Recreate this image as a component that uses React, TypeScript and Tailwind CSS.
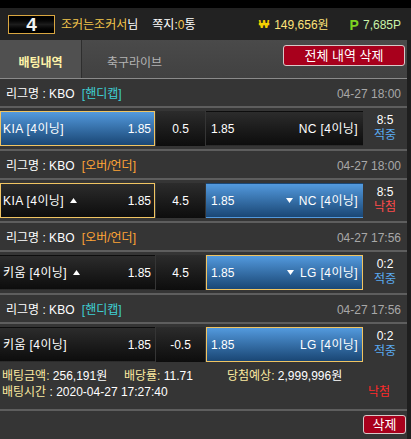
import type { ReactNode } from 'react';

type BoxKind = 'blue' | 'blueSel' | 'dark' | 'darkSel';

const boxClass: Record<BoxKind, string> = {
  blue: 'bg-linear-to-b from-[#539ade] to-[#1a4775] border border-transparent',
  blueSel: 'bg-linear-to-b from-[#539ade] to-[#1a4775] border border-[#f0c462]',
  dark: 'bg-linear-to-b from-[#2c2c2c] to-[#0d0d0d] border border-transparent',
  darkSel: 'bg-linear-to-b from-[#2c2c2c] to-[#0d0d0d] border border-[#f0c462]',
};

interface Bet {
  type: string;
  typeColor: string;
  date: string;
  home: string;
  homeOdds: string;
  line: string;
  away: string;
  awayOdds: string;
  homeKind: BoxKind;
  awayKind: BoxKind;
  arrows?: boolean;
  score: string;
  win: boolean;
}

const bets: Bet[] = [
  { type: '[핸디캡]', typeColor: 'text-[#3fd0d4]', date: '04-27 18:00', home: 'KIA [4이닝]', homeOdds: '1.85', line: '0.5', away: 'NC [4이닝]', awayOdds: '1.85', homeKind: 'blueSel', awayKind: 'dark', score: '8:5', win: true },
  { type: '[오버/언더]', typeColor: 'text-[#ffa435]', date: '04-27 18:00', home: 'KIA [4이닝]', homeOdds: '1.85', line: '4.5', away: 'NC [4이닝]', awayOdds: '1.85', homeKind: 'darkSel', awayKind: 'blue', arrows: true, score: '8:5', win: false },
  { type: '[오버/언더]', typeColor: 'text-[#ffa435]', date: '04-27 17:56', home: '키움 [4이닝]', homeOdds: '1.85', line: '4.5', away: 'LG [4이닝]', awayOdds: '1.85', homeKind: 'dark', awayKind: 'blueSel', arrows: true, score: '0:2', win: true },
  { type: '[핸디캡]', typeColor: 'text-[#3fd0d4]', date: '04-27 17:56', home: '키움 [4이닝]', homeOdds: '1.85', line: '-0.5', away: 'LG [4이닝]', awayOdds: '1.85', homeKind: 'dark', awayKind: 'blueSel', score: '0:2', win: true },
];

function Up() {
  return (
    <svg width="7" height="5" viewBox="0 0 7 5" className="ml-[6px]">
      <path d="M3.5 0 L7 5 L0 5 Z" fill="#fff" />
    </svg>
  );
}
function Down() {
  return (
    <svg width="7" height="5" viewBox="0 0 7 5" className="mr-[6px]">
      <path d="M0 0 L7 0 L3.5 5 Z" fill="#fff" />
    </svg>
  );
}

function BetBlock({ b, last }: { b: Bet; last: boolean }) {
  return (
    <div className="shrink-0">
      <div className="flex h-[27px] items-center justify-between px-[6px] pt-[2px]">
        <span className="text-white">
          리그명 : KBO <span className={`ml-1 ${b.typeColor}`}>{b.type}</span>
        </span>
        <span className="text-[#a8a8a8]">{b.date}</span>
      </div>
      <div className="h-[2px] bg-[#5e5e5e]" />
      <div className="flex h-[41px] items-start pt-[3px]">
        <div className={`flex h-[35px] w-[155px] items-center justify-between pl-[2px] pr-[3px] text-white ${boxClass[b.homeKind]}`}>
          <span className="flex items-center tracking-[0.4px]">
            {b.home}
            {b.arrows && <Up />}
          </span>
          <span>{b.homeOdds}</span>
        </div>
        <div className="ml-px flex h-[35px] w-[49px] items-center justify-center bg-linear-to-b from-[#2c2c2c] to-[#0d0d0d] text-white">
          {b.line}
        </div>
        <div className={`ml-px flex h-[35px] w-[157px] items-center justify-between pl-[4px] pr-[4px] text-white ${boxClass[b.awayKind]}`}>
          <span>{b.awayOdds}</span>
          <span className="flex items-center tracking-[0.4px]">
            {b.arrows && <Down />}
            {b.away}
          </span>
        </div>
        <div className="flex flex-1 flex-col items-center pt-[2px] leading-[15px]">
          <span className="text-white">{b.score}</span>
          <span className={b.win ? 'text-[#5aaaf0]' : 'text-[#ff4b4b]'}>{b.win ? '적중' : '낙첨'}</span>
        </div>
      </div>
      {!last && <div className="h-[2px] bg-[#5e5e5e]" />}
    </div>
  );
}

function Label({ children }: { children: ReactNode }) {
  return <span className="text-[#fbeaa0]">{children}</span>;
}

export default function App() {
  return (
    <div
      className="flex h-[439px] w-[411px] flex-col overflow-hidden bg-[#353535] text-[12px]"
      style={{ fontFamily: '"Liberation Sans", "Noto Sans CJK KR", sans-serif' }}
    >
      <div className="h-[8px] shrink-0 bg-black" />
      <div className="flex h-[32px] shrink-0 items-center bg-[#222222] pl-[8px] pt-[1px]">
        <div className="flex h-[19px] w-[47px] items-center justify-center border border-[#d9a640] bg-linear-to-b from-[#000] via-[#1c1c1c] to-[#000]">
          <span className="text-[19px] font-black leading-none text-[#f4f4f4]">4</span>
        </div>
        <span className="ml-[6px] text-[#f3c64c]">
          조커는조커서<span className="text-white">님</span>
        </span>
        <span className="ml-[14px] text-white">
          쪽지:<span className="text-[#f3c64c]">0</span>통
        </span>
        <span className="ml-auto flex items-center text-[#ffe47a]">
          <span className="mr-[5px] text-[11px] font-bold text-[#f5d000]">₩</span>149,656원
        </span>
        <span className="ml-[21px] mr-[10px] flex items-center text-[#c9f3a8]">
          <span className="mr-[4px] text-[14px] font-bold leading-none text-[#7ed321]">P</span>7,685P
        </span>
      </div>
      <div className="flex min-h-0 flex-1">
        <div className="flex w-[407px] flex-col">
          <div className="flex h-[38px] shrink-0 items-stretch bg-linear-to-b from-[#4a4a4a] to-[#414141]">
            <div className="flex w-[82px] items-center justify-center border-r border-[#2e2e2e] bg-[#505050] pt-[8px] font-bold text-[#fff3a8]">
              배팅내역
            </div>
            <div className="flex w-[105px] items-center justify-center pt-[8px] text-[#b4b4b4]">축구라이브</div>
            <div className="ml-auto pr-[2px] pt-[5px]">
              <button className="h-[21px] w-[122px] rounded-[3px] border border-[#d8c8c8] bg-[#a8001c] text-[13px] leading-none text-white">
                전체 내역 삭제
              </button>
            </div>
          </div>
          <div className="h-px shrink-0 bg-[#8a8a8a]" />
          {bets.map((b, i) => (
            <BetBlock key={i} b={b} last={i === bets.length - 1} />
          ))}
          <div className="flex shrink-0 flex-col px-[2px] pt-[3px] leading-[16px] text-white">
            <div className="flex">
              <span className="w-[122px]">
                <Label>배팅금액:</Label> 256,191원
              </span>
              <span className="w-[103px]">
                <Label>배당률:</Label> 11.71
              </span>
              <span>
                <Label>당첨예상:</Label> 2,999,996원
              </span>
            </div>
            <div className="flex">
              <span>
                <Label>배팅시간</Label> : 2020-04-27 17:27:40
              </span>
              <span className="ml-auto mr-[15px] text-[#ff2a2a]">낙첨</span>
            </div>
          </div>
          <div className="mt-[9px] h-[2px] shrink-0 bg-[#5e5e5e]" />
          <div className="flex shrink-0 justify-end pr-[1px] pt-[4px]">
            <button className="h-[19px] w-[43px] rounded-[3px] border border-[#d8c8c8] bg-[#a8001c] text-[13px] leading-none text-white">
              삭제
            </button>
          </div>
        </div>
        <div className="w-[4px] bg-[#1e1e1e]" />
      </div>
    </div>
  );
}
